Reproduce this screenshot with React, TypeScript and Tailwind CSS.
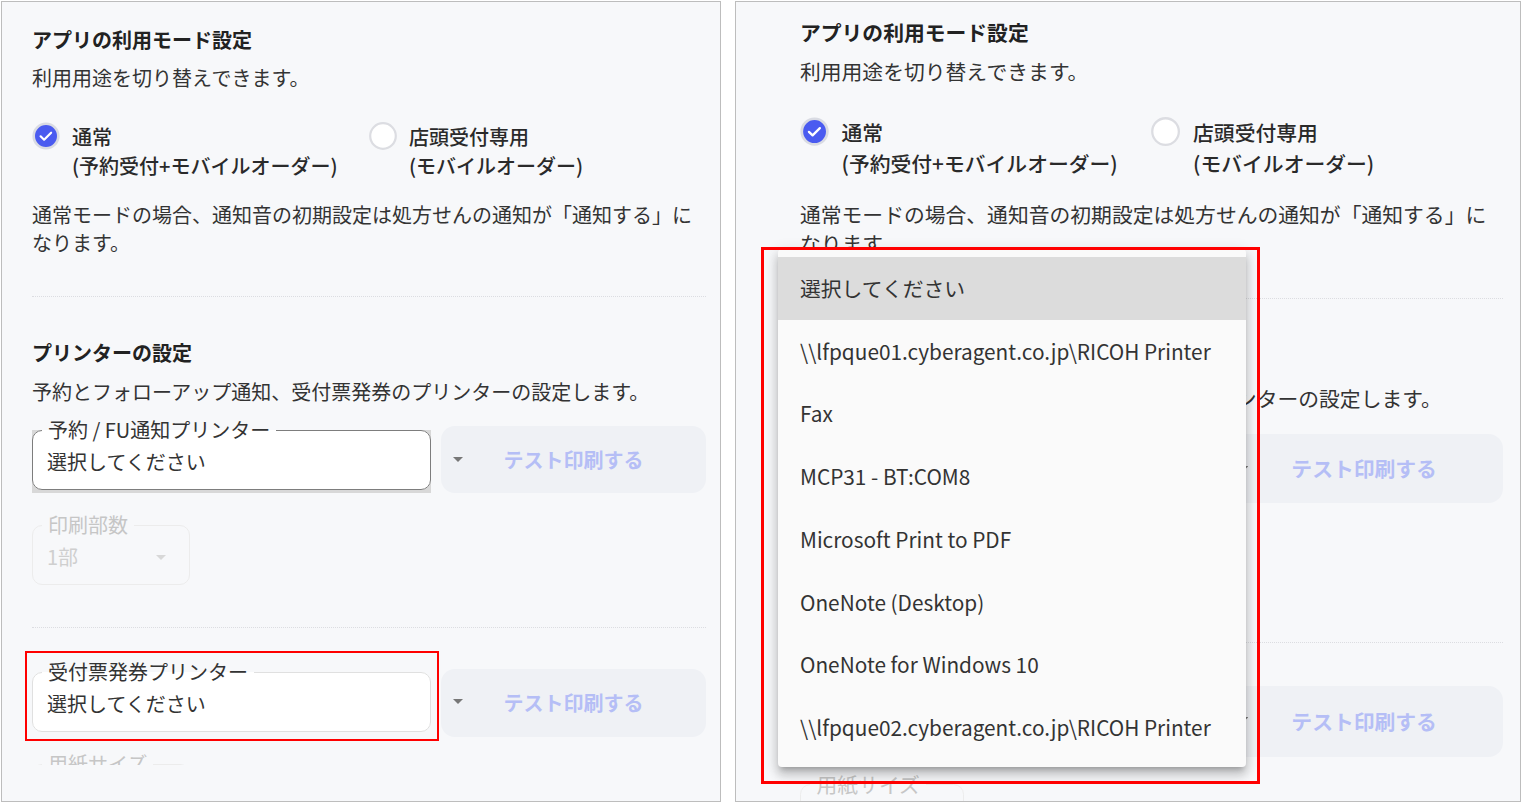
import clsx from 'clsx';

const printers = [
  '選択してください',
  '\\\\lfpque01.cyberagent.co.jp\\RICOH Printer',
  'Fax',
  'MCP31 - BT:COM8',
  'Microsoft Print to PDF',
  'OneNote (Desktop)',
  'OneNote for Windows 10',
  '\\\\lfpque02.cyberagent.co.jp\\RICOH Printer',
];

function Arrow({ muted }: { muted?: boolean }) {
  return (
    <svg width="10" height="5" viewBox="0 0 10 5" className="block">
      <path d="M0 0h10L5 5z" fill={muted ? '#d8d8d8' : '#777777'} />
    </svg>
  );
}

function CheckedRadio() {
  return (
    <svg width="28" height="28" viewBox="0 0 28 28" className="block shrink-0">
      <circle cx="14" cy="14" r="12.3" fill="#4a5bf0" stroke="#d9dbe3" strokeWidth="2.6" />
      <path d="M8.6 14.3l3.5 3.4 7-7" fill="none" stroke="#ffffff" strokeWidth="2.2" strokeLinecap="round" strokeLinejoin="round" />
    </svg>
  );
}

function UncheckedRadio() {
  return (
    <svg width="28" height="28" viewBox="0 0 28 28" className="block shrink-0">
      <circle cx="14" cy="14" r="12.8" fill="#ffffff" stroke="#dcdde2" strokeWidth="2.2" />
    </svg>
  );
}

function SelectField({ label, value, variant }: { label: string; value: string; variant: 'focus' | 'idle' }) {
  return (
    <div className="relative w-[399px] shrink-0">
      {variant === 'focus' && <div className="absolute inset-x-0 top-[10px] bottom-0 bg-[#d8d8d8]" />}
      <fieldset
        className={clsx(
          'relative rounded-[10px] border bg-white px-[9px] pb-[13px]',
          variant === 'focus' ? 'border-[#7d7d7d]' : 'border-[#e0e0e0]'
        )}
      >
        <legend className="px-[6px] text-[20px] leading-[20px] text-[#333]">{label}</legend>
        <div className="pl-[5px] pt-[8px] text-[20px] leading-7 text-[#333]">{value}</div>
      </fieldset>
    </div>
  );
}

function TestButton({ className }: { className: string }) {
  return (
    <div
      className={clsx(
        'ml-[10px] flex flex-1 items-center justify-center rounded-[14px] bg-[#eff1f5] text-[20px] font-bold text-[#b5bef6]',
        className
      )}
    >
      テスト印刷する
    </div>
  );
}

function DisabledField({ label, value }: { label: string; value: string }) {
  return (
    <fieldset className="w-[158px] rounded-[10px] border border-[#ececec] px-[9px] pb-[13px]">
      <legend className="px-[6px] text-[20px] leading-[20px] text-[#c6c6c6]">{label}</legend>
      <div className="flex items-center justify-between pl-[5px] pt-[8px] text-[20px] leading-7 text-[#cfcfcf]">
        <span>{value}</span>
        <span className="mr-[14px]">
          <Arrow muted />
        </span>
      </div>
    </fieldset>
  );
}

function SettingsContent() {
  return (
    <div className="text-[20px] text-[#333]">
      <h2 className="text-[20px] font-bold leading-7 text-[#222]">アプリの利用モード設定</h2>
      <p className="mt-[10px] leading-7">利用用途を切り替えできます。</p>

      <div className="mt-[30px] grid grid-cols-2">
        <div className="flex items-start gap-[12px]">
          <CheckedRadio />
          <div className="font-medium leading-[29px] text-[#2a2a2a]">
            <div>通常</div>
            <div>(予約受付+モバイルオーダー)</div>
          </div>
        </div>
        <div className="flex items-start gap-[12px]">
          <UncheckedRadio />
          <div className="font-medium leading-[29px] text-[#2a2a2a]">
            <div>店頭受付専用</div>
            <div>(モバイルオーダー)</div>
          </div>
        </div>
      </div>

      <p className="mt-[21px] leading-7">
        通常モードの場合、通知音の初期設定は処方せんの通知が「通知する」になります。
      </p>

      <div className="mt-[39px] border-t border-dotted border-[#dcdde1]" />

      <h2 className="mt-[42px] font-bold leading-7 text-[#222]">プリンターの設定</h2>
      <p className="mt-[11px] leading-7">予約とフォローアップ通知、受付票発券のプリンターの設定します。</p>

      <div className="relative mt-[14px] flex">
        <SelectField label="予約 / FU通知プリンター" value="選択してください" variant="focus" />
        <TestButton className="mt-[6px] h-[67px]" />
        <div className="absolute left-[421px] top-[37px]">
          <Arrow />
        </div>
      </div>

      <div className="mt-[22px]">
        <DisabledField label="印刷部数" value="1部" />
      </div>

      <div className="mt-[42px] border-t border-dotted border-[#dcdde1]" />

      <div className="relative mt-[34px] flex">
        <SelectField label="受付票発券プリンター" value="選択してください" variant="idle" />
        <TestButton className="mt-[7px] h-[68px]" />
        <div className="absolute left-[421px] top-[37px]">
          <Arrow />
        </div>
      </div>

      <div className="mt-[17px]">
        <DisabledField label="用紙サイズ" value="A4" />
      </div>
    </div>
  );
}

function PrinterMenu() {
  return (
    <div className="absolute left-[42px] top-[247px] w-[468px] rounded-[4px] bg-[#fafafa] py-[8px] shadow-[0_5px_5px_-3px_rgba(0,0,0,0.2),0_8px_10px_1px_rgba(0,0,0,0.14),0_3px_14px_2px_rgba(0,0,0,0.12)]">
      {printers.map((name, i) => (
        <div
          key={name}
          className={clsx(
            'flex h-[62.75px] items-center pl-[22px] text-[20.8px] text-[#333]',
            i === 0 && 'bg-[#dcdcdc]'
          )}
        >
          {name}
        </div>
      ))}
    </div>
  );
}

export default function App() {
  return (
    <div className="relative flex h-[803px] w-[1522px] gap-[14px] bg-white pl-[1px] pt-[1px] font-['Noto_Sans_CJK_JP','Noto_Sans',sans-serif]">
      <div className="h-[801px] w-[720px] shrink-0 overflow-hidden border border-[#bdbdbd] bg-[#f7f8fa]">
        <div className="h-[763px] overflow-hidden pl-[30px] pr-[14px] pt-[24px]">
          <SettingsContent />
        </div>
      </div>

      <div className="relative h-[801px] w-[786px] shrink-0 overflow-hidden border border-[#bdbdbd] bg-[#f7f8fa]">
        <div className="pl-[61.5px] pt-[15px] [zoom:1.04]">
          <div className="w-[676px]">
            <SettingsContent />
          </div>
        </div>
        <PrinterMenu />
      </div>

      <div className="pointer-events-none absolute left-[25px] top-[651px] h-[90px] w-[414px] border-2 border-[#ff0000]" />
      <div className="pointer-events-none absolute left-[761px] top-[247px] h-[537px] w-[499px] border-[3px] border-[#ff0000]" />
    </div>
  );
}
